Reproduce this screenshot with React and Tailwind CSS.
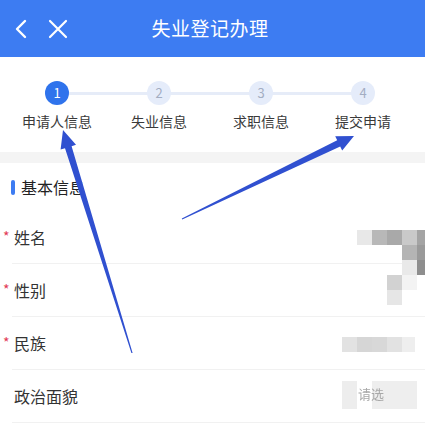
import React from "react";

const steps = ["申请人信息", "失业信息", "求职信息", "提交申请"];

const rows = [
  { label: "姓名", required: true },
  { label: "性别", required: true },
  { label: "民族", required: true },
  { label: "政治面貌", required: false },
];

// blurred (mosaic) values on the right side: [x, y, w, h, colour]
const mosaic = [
  [357, 230, 15, 15, "#e8e8e8"],
  [372, 230, 15, 15, "#b8b8b8"],
  [387, 230, 15, 15, "#a9a9a9"],
  [402, 230, 15, 15, "#c9c9c9"],
  [417, 230, 8, 15, "#a4a4a4"],
  [402, 245, 15, 15, "#b4b4b4"],
  [417, 245, 8, 15, "#9a9a9a"],
  [402, 260, 15, 15, "#e9e9e9"],
  [417, 260, 8, 15, "#8e8e8e"],
  [387, 275, 15, 15, "#d2d2d2"],
  [402, 275, 15, 15, "#f3f3f3"],
  [387, 290, 15, 15, "#e6e6e6"],
  [342, 337, 15, 15, "#e2e2e2"],
  [357, 337, 15, 15, "#d6d6d6"],
  [372, 337, 15, 15, "#d8d8d8"],
  [387, 337, 15, 15, "#e2e2e2"],
  [402, 337, 13, 15, "#eeeeee"],
  [342, 381, 15, 28, "#ededed"],
  [372, 381, 45, 28, "#eeeeee"],
];

export default function App() {
  return (
    <div
      className="relative w-[425px] h-[425px] overflow-hidden bg-white text-[#333]"
      style={{ fontFamily: '"Noto Sans CJK SC", "Noto Sans", sans-serif' }}
    >
      {/* header */}
      <div className="h-[57px] bg-[#3d7cf2] flex items-center relative">
        <div className="flex items-center gap-[20px] pl-[14px]">
          <svg width="14" height="20" viewBox="0 0 14 20" fill="none">
            <path d="M11 2 L3 10 L11 18" stroke="white" strokeWidth="2.4" strokeLinecap="round" strokeLinejoin="round" />
          </svg>
          <svg width="20" height="20" viewBox="0 0 20 20" fill="none">
            <path d="M2 2 L18 18 M18 2 L2 18" stroke="white" strokeWidth="2.2" strokeLinecap="round" />
          </svg>
        </div>
        <div className="absolute left-0 right-[5px] top-0 h-full flex items-center justify-center text-white text-[19px] tracking-[0.5px]">
          失业登记办理
        </div>
      </div>

      {/* stepper */}
      <div className="h-[95px] pt-[24px] px-[6px] grid grid-cols-[102px_102px_102px_102px]">
        {steps.map((s, i) => (
          <div key={s} className="relative flex flex-col items-center">
            {i < 3 && <div className="absolute top-[11px] left-1/2 w-1/2 h-[3px] bg-[#e6ecf8]" />}
            {i > 0 && <div className="absolute top-[11px] left-0 w-1/2 h-[3px] bg-[#e6ecf8]" />}
            <div
              className={
                i === 0
                  ? "relative w-[24px] h-[24px] rounded-full bg-[#2f73ec] text-white text-[13px] flex items-center justify-center"
                  : "relative w-[24px] h-[24px] rounded-full bg-[#e5ecfa] text-[#a3adc2] text-[13px] flex items-center justify-center"
              }
            >
              {i + 1}
            </div>
            <div className="mt-[6px] text-[14px] leading-[20px] text-[#3a3a3a]">{s}</div>
          </div>
        ))}
      </div>

      <div className="h-[11px] bg-[#f4f4f4]" />

      {/* section */}
      <div className="h-[48px] flex items-center pl-[11px]">
        <div className="w-[4px] h-[15px] rounded-[2px] bg-[#3d7cf2] mr-[6px]" />
        <div className="text-[16px] text-[#222]">基本信息</div>
      </div>

      {rows.map((r) => (
        <div key={r.label} className="ml-[12px] h-[53px] border-b border-[#f1f1f1] flex items-center">
          {r.required && (
            <span className="-ml-[9px] w-[8px] text-[14px] leading-[14px] text-[#e23a55] relative -top-[1px]">*</span>
          )}
          <span className={r.required ? "ml-[3px] text-[16px] text-[#333]" : "ml-[2px] text-[16px] text-[#333]"}>
            {r.label}
          </span>
        </div>
      ))}

      {/* mosaic blur */}
      {mosaic.map(([x, y, w, h, c], i) => (
        <div
          key={i}
          className="absolute"
          style={{ left: x, top: y, width: w, height: h, background: c }}
        />
      ))}
      <div className="absolute left-[358px] top-[386px] text-[13px] text-[#a8a8a8] leading-[16px] blur-[0.5px]">请选</div>

      {/* annotation arrows */}
      <svg className="absolute left-0 top-0 pointer-events-none" width="425" height="425" viewBox="0 0 425 425">
        <polygon
          points="63,130 76,144.8 71.6,146.2 132.6,352.9 131.4,353.1 65,148.2 60.6,149.6"
          fill="#3050d0"
        />
        <polygon
          points="354,136 335.2,136.2 337.2,140.2 181.8,218.4 182.2,219.6 340.2,146.6 342.2,150.6"
          fill="#3050d0"
        />
      </svg>
    </div>
  );
}
